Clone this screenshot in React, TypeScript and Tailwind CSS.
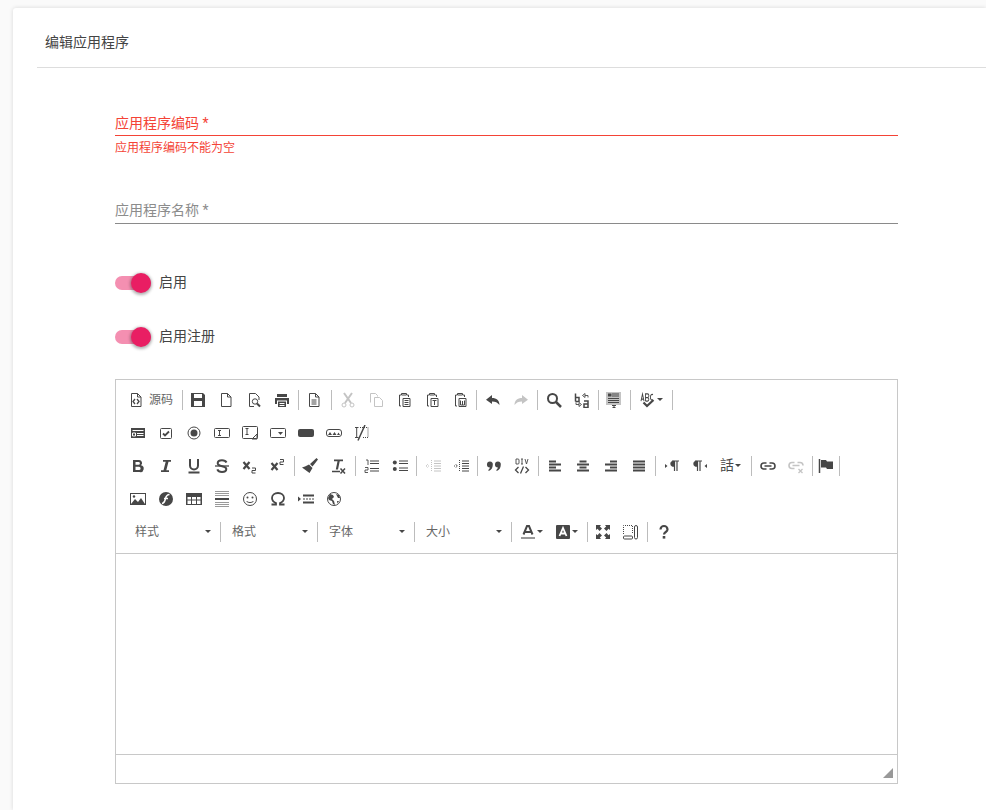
import type { ReactNode } from 'react';

const cjk = { fontFamily: 'Roboto, "Noto Sans CJK SC", sans-serif' };

function Ico({ children, w = 16, dim = false }: { children: ReactNode; w?: number; dim?: boolean }) {
  return (
    <svg width={w} height={16} viewBox={`0 0 ${w} 16`} fill="none" stroke="none" className={dim ? 'text-[#c4c4c4]' : 'text-[#474747]'}>
      {children}
    </svg>
  );
}

const S = { stroke: 'currentColor', strokeWidth: 1 };
const F = { fill: 'currentColor' };

const Page = () => <path d="M3.5 1.5h6l3.5 3.5v9.5H3.5zM9.5 1.5v3.5H13" {...S} />;
const Clip = () => <path d="M5 3H3.5v11H5M11 3h1.5v2M5.5 3V1.5h5V3z" {...S} />;

const icons: Record<string, ReactNode> = {
  source: <Ico><Page /><path d="M7 7L5 9.5 7 12M9 7l2 2.5L9 12" {...S} strokeWidth={1.3} /></Ico>,
  save: <Ico><path fillRule="evenodd" d="M1 1h12l2 2v12H1zM4 2v4h8V2zM4 9v5h8V9z" {...F} /></Ico>,
  newpage: <Ico><Page /></Ico>,
  preview: <Ico><path d="M8 14.5H3.5v-13h6L13 5v3" {...S} /><circle cx="9" cy="9.5" r="2.7" {...S} /><path d="M11 11.5l3 3" {...S} strokeWidth={2} /></Ico>,
  print: <Ico><path fillRule="evenodd" d="M3 2h10v3H3zM1 6h14v6h-2V8.500H3V12H1zM4 9.500h8V15H4zM5.500 11v1h5v-1zM5.500 13v1h5v-1z" {...F} /></Ico>,
  templates: <Ico><Page /><path d="M5.500 8h5M5.500 10h5M5.500 12h5" {...S} /></Ico>,
  cut: <Ico dim><path d="M4 1l7 10M12 1L5 11" {...S} strokeWidth={2} /><circle cx="4" cy="13" r="2" {...S} /><circle cx="12" cy="13" r="2" {...S} /></Ico>,
  copy: <Ico dim><path d="M2.500 10.500v-9h5l2 2v1M6.500 14.500v-9h5l3 3v6z" {...S} /></Ico>,
  paste: <Ico><Clip /><path d="M7 6.500h7v8H7zM8.500 8.500h4M8.500 10.500h4M8.500 12.500h4" {...S} /></Ico>,
  pasteT: <Ico><Clip /><path d="M7 6.500h7v8H7zM8.500 8.500h4M10.500 8.500v4.500" {...S} /></Ico>,
  pasteW: <Ico><Clip /><path d="M7 6.500h7v8H7zM8.500 8.500v4.500h4V8.500M10.500 9v4" {...S} /></Ico>,
  undo: <Ico><path d="M7 3L1 7.700 7 12V9.500c3.500 0 5.500 1 7.500 3.500 0-4.500-3-7-7.500-7z" {...F} /></Ico>,
  redo: <Ico dim><path d="M9 3l6 4.700L9 12V9.500c-3.500 0-5.500 1-7.500 3.500 0-4.500 3-7 7.500-7z" {...F} /></Ico>,
  find: <Ico><circle cx="6.500" cy="6.500" r="4.500" {...S} strokeWidth={2} /><path d="M10 10l5 5" {...S} strokeWidth={2.500} /></Ico>,
  replace: <Ico><path d="M1.500 1.500v8M1.500 5.500h3.500v4H1.500M10 9h4v6.500h-4V12h4" {...S} strokeWidth={1.500} /><path d="M8.500 3.500L11 1.500v4zM11 3.500h3v2" {...S} strokeWidth={0.900} /><path d="M7.500 12.500L5 10.500v4zM5 12.500H2v-2" {...S} strokeWidth={0.900} /></Ico>,
  selectall: <Ico><rect x="0" y="0" width="15" height="13" fill="#c4c4c4" /><path d="M2 1.500h3.500v3H2z" {...F} /><path d="M6 2h7M6 4h7M2 6.500h11M2 8.500h11M2 10.500h11" {...S} /><path d="M6 13.500h4M8 13v2.500M6.500 15.500h3" {...S} /></Ico>,
  spell: <Ico><g transform="scale(1 1.3)"><path d="M1 7l1.500-5.500L4 7M1.500 5.500h2M5.500 7V1.500h2a1.200 1.200 0 010 2.800h-2M7.500 4.300a1.300 1.300 0 010 2.700h-2M13 2a2 2 0 00-2.500 1v2A2 2 0 0013 6" {...S} strokeWidth={0.900} /></g><path d="M3.500 10.500l3.500 3.500 6.500-6" {...S} strokeWidth={2.200} /></Ico>,
  form: <Ico><rect x="1" y="3" width="14" height="10" {...F} /><path d="M2.500 5.500h11" stroke="#fff" /><path d="M2.500 8h3v3h-3zM7 8.500h6.500M7 10.500h6.500" stroke="#fff" /></Ico>,
  checkbox: <Ico><rect x="2.500" y="3.500" width="11" height="10" rx="1" {...S} /><path d="M5 8.500l2 2 4-4" {...S} strokeWidth={1.800} /></Ico>,
  radio: <Ico><circle cx="8" cy="8" r="6" {...S} /><circle cx="8" cy="8" r="3.500" {...F} /></Ico>,
  textfield: <Ico><rect x="0.500" y="3.500" width="15" height="9" rx="1" {...S} /><path d="M4 5.500h3M4 10.500h3M5.500 5.500v5" {...S} /></Ico>,
  textarea: <Ico><path d="M15.500 8v4.500a1 1 0 01-1 1h-13a1 1 0 01-1-1v-10a1 1 0 011-1h13a1 1 0 011 1V8" {...S} /><path d="M3.500 3.500h3M3.500 9.500h3M5 3.500v6M15 9l-5 5h5z" {...S} /></Ico>,
  select: <Ico><rect x="0.500" y="3.500" width="15" height="9" rx="1" {...S} /><path d="M8 7h5l-2.500 3z" {...F} /></Ico>,
  button: <Ico><rect x="0" y="4" width="16" height="8" rx="2" {...F} /></Ico>,
  imagebutton: <Ico><rect x="0.500" y="4.500" width="15" height="7" rx="2.500" {...S} /><path d="M2 10l2-3 2 3zM6.500 10l2-3 2 3zM11 10l1.500-2.500L14 10z" {...F} /></Ico>,
  hidden: <Ico><path d="M1 2.500h3.500M1 12.500h3.500M2.700 2.500v10" {...S} /><path d="M6 2.500h8v10H8" {...S} strokeDasharray="1 1" /><path d="M4 15.500L11 0" {...S} strokeWidth={1.500} /></Ico>,
  bold: <Ico><path fillRule="evenodd" d="M3 2h6a3 3 0 012 5.300A3.300 3.300 0 019.500 14H3zM5.500 4v2.800H8.500a1.400 1.400 0 000-2.800zM5.500 8.800V12H9a1.600 1.600 0 000-3.200z" {...F} /></Ico>,
  italic: <Ico><path d="M5 2h8v1.700h-2.500L8.300 12.300H11V14H3v-1.700h2.500l2.200-8.600H5z" {...F} /></Ico>,
  underline: <Ico><path d="M4 1v6.500a4 4 0 008 0V1M2.500 14.500h11" {...S} strokeWidth={2} /></Ico>,
  strike: <Ico><path d="M12.500 4.500C11.800 3 10.200 2.200 8 2.200c-2.700 0-4.300 1.200-4.300 3 0 4 8.600 2 8.600 5.800 0 1.800-1.700 2.900-4.300 2.900-2.400 0-4-1-4.700-2.600" {...S} strokeWidth={2} /><path d="M1 8h14" {...S} strokeWidth={1.300} /></Ico>,
  sub: <Ico><path d="M1.500 4l6 7M7.500 4l-6 7" {...S} strokeWidth={2.200} /><path d="M10 10h3.500v2.500H10V15h3.500" {...S} /></Ico>,
  sup: <Ico><path d="M1.500 5l6 7M7.500 5l-6 7" {...S} strokeWidth={2.200} /><path d="M10 1.500h3.500V4H10v2.500h3.500" {...S} /></Ico>,
  brush: <Ico><path d="M14.500 0L16 1.500 10.500 8.500 8 6zM7 6.500l3.500 3.500L7.500 15 0 9.500l3-1z" {...F} /></Ico>,
  removeformat: <Ico><path d="M4 1.500h9v1.800h-3.300L8 11.500H5.800l1.700-8.200H4z" {...F} /><path d="M2 13.500h8" {...S} strokeWidth={1.500} /><path d="M10.500 10.500l4.500 5M15 10.500l-4.500 5" {...S} strokeWidth={1.500} /></Ico>,
  ol: <Ico><path d="M6 3h9M6 5.500h9M6 10.500h9M6 13h9" {...S} strokeWidth={1.200} /><path d="M2 2h2v5M1 9.500h3v2.500H1v2.500h3" {...S} strokeWidth={0.900} /></Ico>,
  ul: <Ico><circle cx="2.800" cy="4.500" r="2" {...F} /><circle cx="2.800" cy="11" r="2" {...F} /><path d="M7 3h9M7 5.500h9M7 10h9M7 12.500h9" {...S} strokeWidth={1.200} /></Ico>,
  outdent: <Ico dim><path d="M1 8h3M3 6L1 8l2 2M6.500 2v12" {...S} strokeDasharray="1 1" /><path d="M9 3h7M9 5.500h7M9 8h7M9 10.500h7M9 13h7" {...S} /></Ico>,
  indent: <Ico><path d="M1 8h3M2.500 6L4.500 8l-2 2M6.500 2v12" {...S} strokeDasharray="1 1" /><path d="M9 3h7M9 5.500h7M9 8h7M9 10.500h7M9 13h7" {...S} /></Ico>,
  quote: <Ico><path d="M4 3.500a3 3 0 012.800 3.200c0 3-1.500 5.300-4 6.300l-.6-1c1-.7 1.500-1.500 1.700-2.500A3 3 0 014 3.500zM12 3.500a3 3 0 012.800 3.200c0 3-1.500 5.300-4 6.300l-.6-1c1-.7 1.500-1.500 1.700-2.500A3 3 0 0112 3.500z" {...F} /></Ico>,
  div: <Ico><path d="M2 1h2a1 1 0 011 1v3a1 1 0 01-1 1H2zM7 1h2M8 1v5M7 6h2M11 1l1.500 5L14 1" {...S} strokeWidth={0.900} /><path d="M4.500 9L1.500 12l3 3M11.500 9l3 3-3 3M9.500 8.500l-3 7" {...S} strokeWidth={1.300} /></Ico>,
  left: <Ico><path d="M2 3.500h7M2 6.500h12M2 9.500h7M2 12.500h12" {...S} strokeWidth={2} /></Ico>,
  center: <Ico><path d="M4.500 3.500h7M2 6.500h12M4.500 9.500h7M2 12.500h12" {...S} strokeWidth={2} /></Ico>,
  right: <Ico><path d="M7 3.500h7M2 6.500h12M7 9.500h7M2 12.500h12" {...S} strokeWidth={2} /></Ico>,
  justify: <Ico><path d="M2 3.500h12M2 6.500h12M2 9.500h12M2 12.500h12" {...S} strokeWidth={2} /></Ico>,
  ltr: <Ico><path d="M1 6l2.500 2L1 10z" {...F} /><path d="M8 3h7M10.500 3v10M13 3v10" {...S} strokeWidth={1.200} /><path d="M10.500 3a3 3 0 100 5.500z" {...F} /></Ico>,
  rtl: <Ico><path d="M15 6l-2.500 2 2.500 2z" {...F} /><path d="M3 3h7M5.500 3v10M8 3v10" {...S} strokeWidth={1.200} /><path d="M5.500 3a3 3 0 100 5.500z" {...F} /></Ico>,
  link: <Ico><path d="M6.500 5H4a3 3 0 000 6h2.500M9.500 5H12a3 3 0 010 6H9.500M4.500 8h7" {...S} strokeWidth={1.600} /></Ico>,
  unlink: <Ico dim><path d="M6.500 4.500H4a3 3 0 000 6h2.500M9.500 4.500H12a3 3 0 013 3M4.500 7.500h7" {...S} strokeWidth={1.600} /><path d="M10.500 11l4 4M14.500 11l-4 4" {...S} strokeWidth={1.300} /></Ico>,
  flag: <Ico><path d="M1.500 1v14" {...S} strokeWidth={1.500} /><path d="M3 2h5l1 1.500h6V11H9L8 9.500H3z" {...F} /></Ico>,
  image: <Ico><rect x="0.500" y="2.500" width="15" height="11" {...S} /><path d="M1 13l4-5 3 3 3-4 4 6z" {...F} /><circle cx="4" cy="5.500" r="1.200" {...F} /></Ico>,
  flash: <Ico><circle cx="8" cy="8" r="7" {...F} /><path d="M11.500 3.500C8.500 3.500 8 5.500 7.500 7.500 7 10 6.500 12 4 12.500M6 7.500h4" stroke="#fff" strokeWidth={1.500} /></Ico>,
  table: <Ico><rect x="0" y="2" width="16" height="12" {...F} /><path d="M1.500 6h3.500v2.500H1.500zM6 6h4v2.500H6zM11 6h3.500v2.500H11zM1.500 9.500h3.500V13H1.500zM6 9.500h4V13H6zM11 9.500h3.500V13H11z" fill="#fff" /></Ico>,
  hr: <Ico><path d="M1 .5h14M1 2.500h14M1 4.500h14M1 11.500h14M1 13.500h14M1 15.500h14" stroke="#9a9a9a" /><path d="M1 8h14" {...S} strokeWidth={2} /></Ico>,
  smiley: <Ico><circle cx="8" cy="8" r="6.500" {...S} /><circle cx="5.500" cy="6.500" r="1" {...F} /><circle cx="10.500" cy="6.500" r="1" {...F} /><path d="M4.500 10c1 2 6 2 7 0" {...S} /></Ico>,
  omega: <Ico><path d="M1.500 13.500H6v-1.500C3.500 11 2 9.500 2 7c0-3 2.500-5 6-5s6 2 6 5c0 2.500-1.500 4-4 5v1.500h4.500" {...S} strokeWidth={1.800} /></Ico>,
  pagebreak: <Ico><path d="M0 5.500l3 2.500-3 2.500z" {...F} /><path d="M5 4.500h11M5 11.500h11" {...S} strokeWidth={2} /><path d="M5 8h11" {...S} strokeDasharray="2 1" /></Ico>,
  iframe: <Ico><circle cx="8" cy="8" r="6.500" {...S} /><path d="M4 3l3 1 1 2-2 2 2 2 1 4-2-1-1-3-3-1-1-2zM10 3l3 1 1 3-2 0zM11 10h2l-1.500 2.500z" {...F} /></Ico>,
  maximize: <Ico><path d="M1 1h5L4.800 2.500l2.200 2L4.500 7l-2-2.200L1 6zM15 1v5l-1.500-1.200-2 2.200L9 4.500l2.200-2L10 1zM1 15v-5l1.500 1.200 2-2.200L7 11.500l-2.200 2L6 15zM15 15h-5l1.200-1.500-2.200-2L11.500 9l2 2.200L15 10z" {...F} /></Ico>,
  blocks: <Ico><path d="M.5 10V1.500h9V10" {...S} strokeDasharray="1 1" /><rect x="0.500" y="12" width="9" height="3" rx="1" {...S} /><rect x="11.500" y="1.500" width="3" height="13.500" rx="1.500" {...S} /></Ico>,
  help: <Ico><path d="M4.500 5.500a3.500 3.500 0 117 0c0 2.500-3.500 2.500-3.500 5" {...S} strokeWidth={2.200} /><rect x="6.700" y="12" width="2.600" height="2.600" {...F} /></Ico>,
};

// caret used by dropdown buttons and combos
const Caret = ({ className = '' }: { className?: string }) => (
  <span className={`inline-block w-0 h-0 border-x-[3px] border-x-transparent border-t-[3px] border-t-[#474747] ${className}`} />
);

const Btn = ({ i }: { i: string }) => (
  <span className="flex w-[28px] h-[28px] shrink-0 items-center justify-center">{icons[i]}</span>
);

// w is the gap between two button groups, the line sits near its middle
const Sep = ({ className = 'w-[5px]' }: { className?: string }) => (
  <span className={`flex h-[20px] shrink-0 justify-center ${className}`}>
    <span className="w-px h-full bg-[#bcbcbc]" />
  </span>
);

const Row = ({ children }: { children: ReactNode }) => (
  <div className="flex h-[33px] items-center">{children}</div>
);

const Combo = ({ label }: { label: string }) => (
  <span className="flex w-[93px] h-[28px] shrink-0 items-center justify-between pl-[8px] pr-[9px] text-[12px] text-[#666]">
    {label}
    <Caret />
  </span>
);

const Toggle = ({ label }: { label: string }) => (
  <label className="flex items-center h-[20px]">
    <span className="relative w-[36px] h-[14px] rounded-full bg-[#f48fb1]">
      <span className="absolute right-0 top-[-3px] w-[20px] h-[20px] rounded-full bg-[#e91e63] shadow-[0_1px_3px_1px_rgba(0,0,0,0.3)]" />
    </span>
    <span className="ml-[8px] mb-[2px] text-[14px] text-[#444]">{label}</span>
  </label>
);

export default function App() {
  return (
    <div className="min-h-[810px] bg-[#fafafa] pl-[13px] pt-[8px] overflow-hidden" style={cjk}>
      <div className="bg-white h-[802px] rounded-tl-[3px] shadow-[0_0_4px_rgba(0,0,0,0.14)]">
        <div className="ml-[24px] h-[60px] border-b border-[#dddddd] pl-[8px] flex items-center">
          <h1 className="text-[14px] font-normal text-[#444] pt-[9px]">编辑应用程序</h1>
        </div>

        <div className="ml-[102px] w-[783px]">
          <div className="pt-[45px]">
            <div className="h-[22px] text-[14px] leading-[20px] text-[#f44336]">应用程序编码 *</div>
            <div className="h-px bg-[#f44336]" />
            <div className="mt-[3px] text-[12px] leading-[18px] text-[#f44336]">应用程序编码不能为空</div>
          </div>

          <div className="mt-[43px] h-[24px] border-b border-[#8a8a8a] text-[14px] leading-[20px] text-[#8c8c8c]">应用程序名称 *</div>

          <div className="mt-[49px]"><Toggle label="启用" /></div>
          <div className="mt-[34px]"><Toggle label="启用注册" /></div>

          <div className="mt-[32px] h-[405px] border border-[#c8c8c8] flex flex-col">
            <div className="h-[174px] border-b border-[#c8c8c8] pl-[8px] pt-[3px] shrink-0">
              <Row>
                <span className="flex w-[56px] h-[28px] shrink-0 items-center pl-[4px] text-[12px] text-[#666]">
                  {icons.source}
                  <span className="ml-[5px]">源码</span>
                </span>
                <Sep className="w-[4px]" />
                {['save', 'newpage', 'preview', 'print'].map((i) => <Btn key={i} i={i} />)}
                <Sep className="w-[4px]" />
                <Btn i="templates" />
                <Sep className="w-[6px]" />
                {['cut', 'copy', 'paste', 'pasteT', 'pasteW'].map((i) => <Btn key={i} i={i} />)}
                <Sep />
                {['undo', 'redo'].map((i) => <Btn key={i} i={i} />)}
                <Sep />
                {['find', 'replace'].map((i) => <Btn key={i} i={i} />)}
                <Sep className="w-[4px]" />
                <Btn i="selectall" />
                <Sep className="w-[4px]" />
                <span className="flex w-[38px] h-[28px] shrink-0 items-center pl-[8px]">
                  {icons.spell}
                  <Caret className="ml-[1px]" />
                </span>
                <Sep className="w-[4px]" />
              </Row>
              <Row>
                {['form', 'checkbox', 'radio', 'textfield', 'textarea', 'select', 'button', 'imagebutton', 'hidden'].map((i) => <Btn key={i} i={i} />)}
              </Row>
              <Row>
                {['bold', 'italic', 'underline', 'strike', 'sub', 'sup'].map((i) => <Btn key={i} i={i} />)}
                <Sep className="w-[4px]" />
                {['brush', 'removeformat'].map((i) => <Btn key={i} i={i} />)}
                <Sep className="w-[6px]" />
                {['ol', 'ul'].map((i) => <Btn key={i} i={i} />)}
                <Sep />
                {['outdent', 'indent'].map((i) => <Btn key={i} i={i} />)}
                <Sep />
                {['quote', 'div'].map((i) => <Btn key={i} i={i} />)}
                <Sep />
                {['left', 'center', 'right', 'justify'].map((i) => <Btn key={i} i={i} />)}
                <Sep />
                {['ltr', 'rtl'].map((i) => <Btn key={i} i={i} />)}
                <span className="flex w-[35px] h-[28px] shrink-0 items-center pl-[6px] text-[14px] text-[#474747]">
                  話
                  <Caret className="ml-[1px]" />
                </span>
                <Sep />
                {['link', 'unlink'].map((i) => <Btn key={i} i={i} />)}
                <Sep />
                <span className="flex w-[22px] h-[28px] shrink-0 items-center justify-center">{icons.flag}</span>
                <Sep className="w-[4px]" />
              </Row>
              <Row>
                {['image', 'flash', 'table', 'hr', 'smiley', 'omega', 'pagebreak', 'iframe'].map((i) => <Btn key={i} i={i} />)}
              </Row>
              <Row>
                <span className="w-[3px] shrink-0" />
                <Combo label="样式" />
                <Sep className="w-[4px] justify-start" />
                <Combo label="格式" />
                <Sep className="w-[4px] justify-start" />
                <Combo label="字体" />
                <Sep className="w-[4px] justify-start" />
                <Combo label="大小" />
                <Sep className="w-[4px] justify-start" />
                <span className="flex w-[35px] h-[28px] shrink-0 items-center pl-[5px]">
                  <svg width="16" height="16" viewBox="0 0 16 16" className="text-[#474747]">
                    <path d="M3.500 10.500L7 2h2l3.500 8.500M5 8h6" stroke="currentColor" strokeWidth="2" fill="none" />
                    <rect x="1" y="13" width="14" height="2" fill="#999" />
                  </svg>
                  <Caret className="ml-[1px]" />
                </span>
                <span className="flex w-[35px] h-[28px] shrink-0 items-center pl-[5px]">
                  <svg width="16" height="16" viewBox="0 0 16 16">
                    <rect x="1" y="1" width="14" height="14" rx="1" fill="#474747" />
                    <path d="M4.500 12L8 4l3.500 8M5.800 9.500h4.400" stroke="#fff" strokeWidth="1.800" fill="none" />
                  </svg>
                  <Caret className="ml-[1px]" />
                </span>
                <Sep className="w-[4px]" />
                {['maximize', 'blocks'].map((i) => <Btn key={i} i={i} />)}
                <Sep />
                <Btn i="help" />
              </Row>
            </div>
            <div className="flex-1 bg-white" />
            <div className="h-[29px] shrink-0 border-t border-[#c8c8c8] flex justify-end items-end pr-[4px] pb-[5px]">
              <svg width="10" height="10" viewBox="0 0 10 10"><path d="M10 0v10H0z" fill="#999" /></svg>
            </div>
          </div>
        </div>
      </div>
    </div>
  );
}
